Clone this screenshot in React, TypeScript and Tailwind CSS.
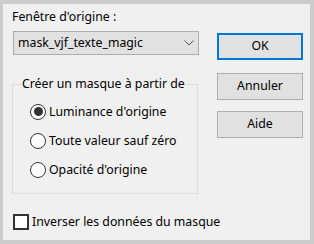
import React from "react";

const font = { fontFamily: '"Noto Sans", "Segoe UI", sans-serif' };

function Radio({ checked, label }: { checked?: boolean; label: string }) {
  return (
    <div className="flex items-center h-[29px]">
      <div className="w-[16px] h-[16px] rounded-full border-[1.5px] border-[#333333] bg-white flex items-center justify-center box-border">
        {checked && <div className="w-[9px] h-[9px] rounded-full bg-[#333333]" />}
      </div>
      <span className="ml-[3px] text-[12.3px] leading-[16px] text-black whitespace-nowrap">{label}</span>
    </div>
  );
}

export default function App() {
  return (
    <div className="w-[314px] h-[244px] bg-[#cccccc] pt-[4px] pl-[3px] pr-[4px] pb-[4px]" style={font}>
      <div className="w-full h-full bg-[#f0f0f0] flex text-black">
        <div className="flex flex-col pl-[9px] w-[196px] shrink-0">
          <div className="mt-[5px] text-[12.3px] leading-[16px] whitespace-nowrap">Fenêtre d'origine :</div>
          <div className="mt-[6px] ml-[1px] w-[186px] h-[24px] border border-[#adadad] bg-[#e1e1e1] flex items-center justify-between pl-[4px] pr-[4px]">
            <span className="text-[12.3px] leading-[16px] whitespace-nowrap">mask_vjf_texte_magic</span>
            <svg width="10" height="6" viewBox="0 0 10 6" fill="none">
              <path d="M0.5 0.5 L5 5 L9.5 0.5" stroke="#555555" strokeWidth="1" />
            </svg>
          </div>
          <fieldset className="mt-[21px] w-[186px] h-[118px] border border-[#dcdcdc] pl-[17px]">
            <legend className="-ml-[9px] px-[1px] text-[12.3px] leading-[16px] whitespace-nowrap">Créer un masque à partir de</legend>
            <div className="flex flex-col mt-[5px]">
              <Radio checked label="Luminance d'origine" />
              <Radio label="Toute valeur sauf zéro" />
              <Radio label="Opacité d'origine" />
            </div>
          </fieldset>
          <div className="mt-[20px] ml-[1px] flex items-center">
            <div className="w-[16px] h-[16px] border-2 border-[#333333] bg-white shrink-0" />
            <span className="ml-[3px] text-[12.3px] leading-[16px] whitespace-nowrap">Inverser les données du masque</span>
          </div>
        </div>
        <div className="flex flex-col pl-[18px]">
          <button className="mt-[29px] w-[86px] h-[27px] border-2 border-[#0078d7] bg-[#e1e1e1] text-[12.3px]">OK</button>
          <button className="mt-[13px] w-[86px] h-[27px] border border-[#adadad] bg-[#e1e1e1] text-[12.3px]">Annuler</button>
          <button className="mt-[11px] w-[86px] h-[27px] border border-[#adadad] bg-[#e1e1e1] text-[12.3px]">Aide</button>
        </div>
      </div>
    </div>
  );
}
